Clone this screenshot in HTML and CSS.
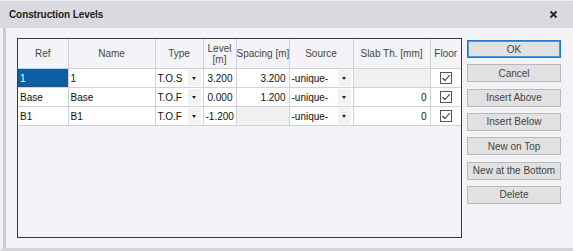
FILE: index.html
```html
<!DOCTYPE html>
<html>
<head>
    <meta charset="UTF-8">
    <title>Construction Levels</title>
    <link rel="stylesheet" href="styles.css">
</head>
<body>
    <div class="window">
        <div class="titlebar">
            <span class="title">Construction Levels</span>
            <svg class="close" width="9" height="9" viewBox="0 0 9 9">
                <path d="M1.5 1.5 L7.5 7.5 M7.5 1.5 L1.5 7.5" stroke="#222" stroke-width="1.8" fill="none"/>
            </svg>
        </div>
        <div class="content">
            <div class="grid">
                <table>
                    <colgroup>
                        <col style="width: 50px">
                        <col style="width: 87px">
                        <col style="width: 48px">
                        <col style="width: 33px">
                        <col style="width: 53px">
                        <col style="width: 64px">
                        <col style="width: 77px">
                        <col style="width: 31px">
                    </colgroup>
                    <thead>
                        <tr>
                            <th>Ref</th>
                            <th>Name</th>
                            <th>Type</th>
                            <th>Level<br>[m]</th>
                            <th>Spacing [m]</th>
                            <th>Source</th>
                            <th>Slab Th. [mm]</th>
                            <th>Floor</th>
                        </tr>
                    </thead>
                    <tbody>
                        <tr>
                            <td class="selected">1</td>
                            <td>1</td>
                            <td class="combo"><div class="combo-box"><span>T.O.S</span><i class="arrow"></i></div></td>
                            <td class="num">3.200</td>
                            <td class="num">3.200</td>
                            <td class="combo"><div class="combo-box"><span>-unique-</span><i class="arrow"></i></div></td>
                            <td class="disabled"></td>
                            <td class="check"><span class="box"><svg width="10" height="10" viewBox="0 0 10 10"><path d="M1.5 5 L4 7.5 L8.8 2" stroke="#333" stroke-width="1.1" fill="none"/></svg></span></td>
                        </tr>
                        <tr>
                            <td>Base</td>
                            <td>Base</td>
                            <td class="combo"><div class="combo-box"><span>T.O.F</span><i class="arrow"></i></div></td>
                            <td class="num">0.000</td>
                            <td class="num">1.200</td>
                            <td class="combo"><div class="combo-box"><span>-unique-</span><i class="arrow"></i></div></td>
                            <td class="num">0</td>
                            <td class="check"><span class="box"><svg width="10" height="10" viewBox="0 0 10 10"><path d="M1.5 5 L4 7.5 L8.8 2" stroke="#333" stroke-width="1.1" fill="none"/></svg></span></td>
                        </tr>
                        <tr>
                            <td>B1</td>
                            <td>B1</td>
                            <td class="combo"><div class="combo-box"><span>T.O.F</span><i class="arrow"></i></div></td>
                            <td class="num">-1.200</td>
                            <td class="disabled"></td>
                            <td class="combo"><div class="combo-box"><span>-unique-</span><i class="arrow"></i></div></td>
                            <td class="num">0</td>
                            <td class="check"><span class="box"><svg width="10" height="10" viewBox="0 0 10 10"><path d="M1.5 5 L4 7.5 L8.8 2" stroke="#333" stroke-width="1.1" fill="none"/></svg></span></td>
                        </tr>
                    </tbody>
                </table>
            </div>
            <div class="buttons">
                <button class="default">OK</button>
                <button>Cancel</button>
                <button>Insert Above</button>
                <button>Insert Below</button>
                <button>New on Top</button>
                <button>New at the Bottom</button>
                <button>Delete</button>
            </div>
        </div>
    </div>
</body>
</html>
```
FILE: styles.css
```css
body {
    margin: 0;
    font-family: "Liberation Sans", Arial, sans-serif;
    background-color: #f3f2f7;
}

.window {
    width: 573px;
    height: 251px;
    box-sizing: border-box;
    background-color: #f3f2f7;
    border-left: 3px solid #f0f0f4;
    border-bottom: 3px solid #d3d3da;
}

.titlebar {
    height: 28px;
    margin-left: -3px;
    background-color: #d9d9e0;
    border-top: 1px solid #eeeef2;
    box-sizing: border-box;
    display: flex;
    align-items: center;
    justify-content: space-between;
    padding: 0 15px 0 9px;
}

.title {
    font-size: 10px;
    font-weight: bold;
    color: #222;
    letter-spacing: -0.1px;
}

.content {
    display: flex;
    gap: 5px;
    padding: 10px 0 0 11px;
    border-left: 3px solid #cbcbd2;
    height: 220px;
    box-sizing: border-box;
}

.grid {
    width: 443px;
    height: 198px;
    border: 1px solid #3a3a3a;
    background-color: #f3f2f7;
}

table {
    border-collapse: collapse;
    table-layout: fixed;
    width: 443px;
    font-size: 10px;
}

th {
    height: 29px;
    padding: 0;
    font-weight: normal;
    color: #444;
    background-color: #f4f4f8;
    border-right: 1px solid #cfcfd4;
    border-bottom: 1px solid #cfcfd4;
    line-height: 11px;
    white-space: nowrap;
}

th:last-child,
td:last-child {
    border-right: none;
}

td {
    height: 18px;
    padding: 0 2px;
    background-color: #fff;
    color: #111;
    border-right: 1px solid #d2d2d6;
    border-bottom: 1px solid #d2d2d6;
    white-space: nowrap;
    overflow: hidden;
}

td.selected {
    background-color: #0b5fa2;
    color: #fff;
}

td.num {
    text-align: right;
    padding-right: 3px;
}

td.disabled {
    background-color: #f1f1f3;
}

td.combo {
    padding: 0 0 0 2px;
}

.combo-box {
    display: flex;
    align-items: center;
    justify-content: space-between;
    height: 18px;
}

.arrow {
    width: 13px;
    height: 16px;
    margin-right: 2px;
    background-color: #f2f2f2;
    display: flex;
    align-items: center;
    justify-content: center;
}

.arrow::after {
    content: "";
    border-left: 2.5px solid transparent;
    border-right: 2.5px solid transparent;
    border-top: 3px solid #222;
}

td.check {
    text-align: center;
    padding: 0;
}

.box {
    display: inline-block;
    width: 10px;
    height: 10px;
    border: 1px solid #555;
    background-color: #fff;
    vertical-align: middle;
}

.box svg {
    display: block;
}

.buttons {
    display: flex;
    flex-direction: column;
    gap: 6.33px;
    padding-top: 2px;
}

button {
    width: 94px;
    height: 18px;
    padding: 0;
    font-family: "Liberation Sans", Arial, sans-serif;
    font-size: 10px;
    color: #444;
    background-color: #e1e1e1;
    border: 1px solid #b9b9b9;
}

button.default {
    border: 1px solid #1979d4;
    box-shadow: inset 0 0 0 1px #4a96df;
}
```
